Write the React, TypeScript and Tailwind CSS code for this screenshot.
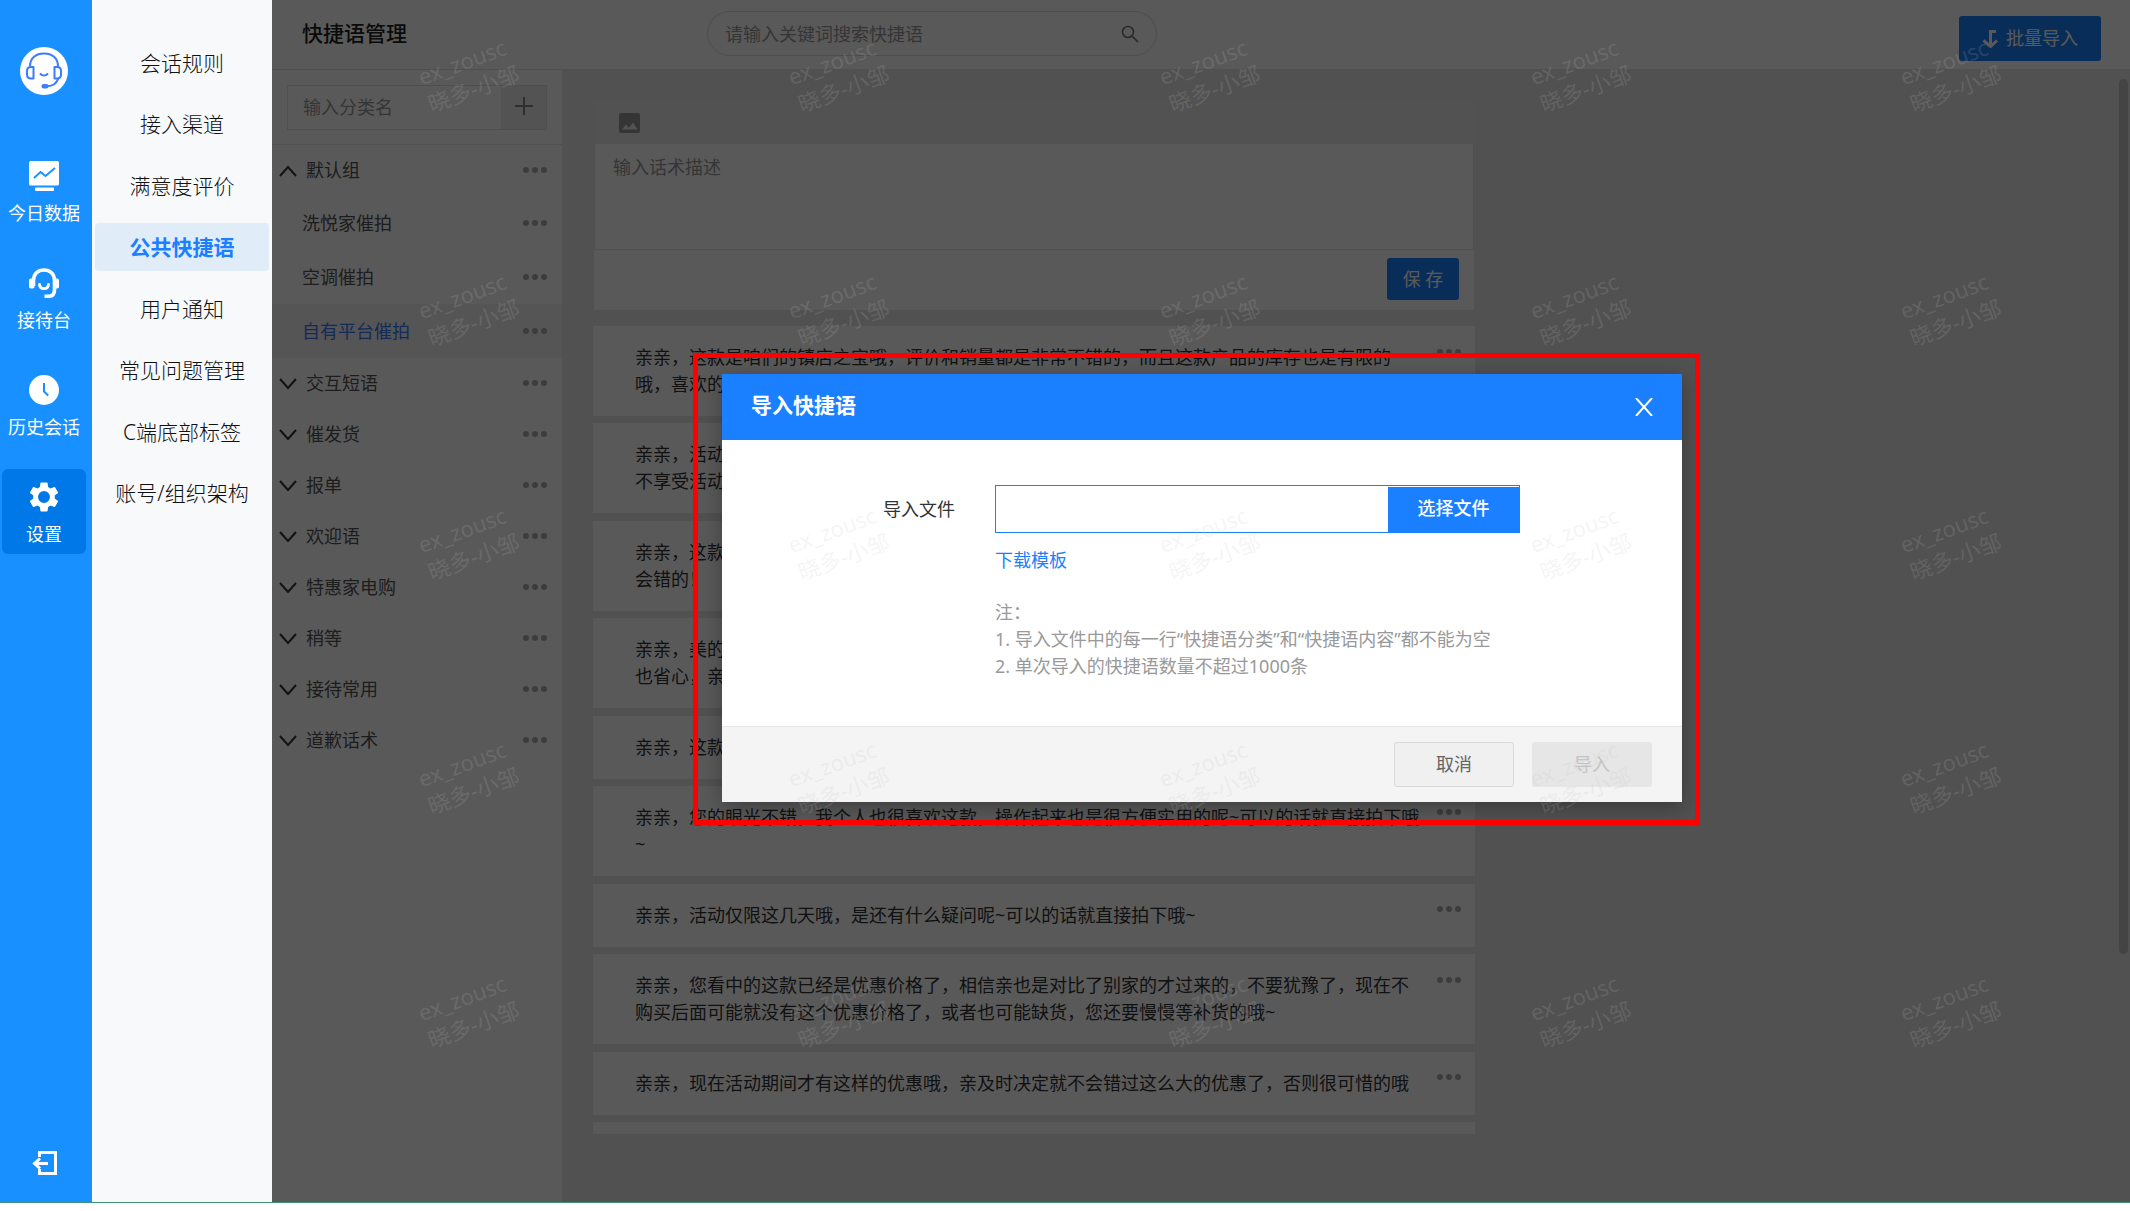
import type { ReactNode } from 'react';
import clsx from 'clsx';

interface NavItem {
  label: string;
  icon: ReactNode;
  active?: boolean;
}

const NAV_ITEMS: NavItem[] = [
  { label: '今日数据', icon: <DataIcon /> },
  { label: '接待台', icon: <HeadsetIcon /> },
  { label: '历史会话', icon: <ClockIcon /> },
  { label: '设置', icon: <GearIcon />, active: true },
];

const MENU_ITEMS = [
  '会话规则',
  '接入渠道',
  '满意度评价',
  '公共快捷语',
  '用户通知',
  '常见问题管理',
  'C端底部标签',
  '账号/组织架构',
];
const ACTIVE_MENU = '公共快捷语';

const DEFAULT_CHILDREN = ['洗悦家催拍', '空调催拍', '自有平台催拍'];
const ACTIVE_CATEGORY = '自有平台催拍';
const GROUPS = ['交互短语', '催发货', '报单', '欢迎语', '特惠家电购', '稍等', '接待常用', '道歉话术'];

const PHRASES = [
  '亲亲，这款是咱们的镇店之宝哦，评价和销量都是非常不错的，而且这款产品的库存也是有限的\n哦，喜欢的',
  '亲亲，活动\n不享受活动',
  '亲亲，这款\n会错的！',
  '亲亲，美的\n也省心，亲',
  '亲亲，这款',
  '亲亲，您的眼光不错，我个人也很喜欢这款，操作起来也是很方便实用的呢~可以的话就直接拍下哦\n~',
  '亲亲，活动仅限这几天哦，是还有什么疑问呢~可以的话就直接拍下哦~',
  '亲亲，您看中的这款已经是优惠价格了，相信亲也是对比了别家的才过来的，不要犹豫了，现在不\n购买后面可能就没有这个优惠价格了，或者也可能缺货，您还要慢慢等补货的哦~',
  '亲亲，现在活动期间才有这样的优惠哦，亲及时决定就不会错过这么大的优惠了，否则很可惜的哦',
];

function AvatarIcon() {
  return (
    <svg viewBox="0 0 48 48" className="size-12">
      <circle cx="24" cy="24" r="24" fill="#fff" />
      <g fill="none" stroke="#3d7bff" strokeWidth="2" strokeLinecap="round">
        <path d="M10 19C10 11 16 6.500 24 6.500S38 11 38 19" />
        <path d="M13.500 20v11.500H11c-2.500 0-4-1.500-4-4V24c0-2.500 1.500-4 4-4z" strokeLinejoin="round" />
        <path d="M34.500 20v11.500H37c2.500 0 4-1.500 4-4V24c0-2.500-1.500-4-4-4z" strokeLinejoin="round" />
        <path d="M38 32c-1.500 4.500-5 7-11 7.300" />
        <path d="M20.500 27c1.800 2 5.200 2 7 0" />
      </g>
      <rect x="21.500" y="37" width="7" height="4.500" rx="2.200" fill="#3d7bff" />
    </svg>
  );
}

function DataIcon() {
  return (
    <svg viewBox="0 0 30 30" className="size-[30px]">
      <rect width="30" height="24.500" rx="1.500" fill="#fff" />
      <rect x="6" y="26.500" width="19" height="3.500" rx="1" fill="#fff" />
      <path d="M5 17l6.500-6 5 4L26 7" fill="none" stroke="#1890ff" strokeWidth="1.800" />
    </svg>
  );
}

function HeadsetIcon() {
  return (
    <svg viewBox="0 0 30 30" className="size-[30px]">
      <path
        d="M4.500 18v-5.500C4.500 6 9 2 15 2s10.500 4 10.500 10.500V22c0 4-2 6-5.500 6.300h-4.500"
        fill="none"
        stroke="#fff"
        strokeWidth="3.600"
      />
      <rect y="10.500" width="5.500" height="10" rx="1.800" fill="#fff" />
      <rect x="24.500" y="10.500" width="5.500" height="10" rx="1.800" fill="#fff" />
      <path d="M10.500 16.500c.5 5.500 8.500 5.500 9 0" fill="none" stroke="#fff" strokeWidth="2.800" strokeLinecap="round" />
    </svg>
  );
}

function ClockIcon() {
  return (
    <svg viewBox="0 0 30 30" className="size-[30px]">
      <circle cx="15" cy="15" r="15" fill="#fff" />
      <path d="M15 8v8.500l4.200 4" fill="none" stroke="#1890ff" strokeWidth="2" />
    </svg>
  );
}

function GearIcon() {
  return (
    <svg viewBox="2 2 20 20" className="size-[30px]" fill="#fff">
      <path d="M19.140 12.940c.04-.3.060-.61.060-.94 0-.32-.02-.64-.07-.94l2.030-1.580a.49.49 0 0 0 .12-.61l-1.920-3.320a.488.488 0 0 0-.59-.22l-2.390.96c-.5-.38-1.030-.7-1.620-.94l-.36-2.540a.484.484 0 0 0-.48-.41h-3.840c-.24 0-.43.17-.47.410l-.36 2.540c-.59.24-1.130.57-1.620.94l-2.390-.96c-.22-.08-.47 0-.59.22L2.740 8.870c-.12.210-.08.470.12.610l2.030 1.580c-.05.3-.09.630-.09.94s.020.640.070.940l-2.030 1.580a.49.49 0 0 0-.12.610l1.920 3.320c.12.220.37.290.59.220l2.390-.96c.5.380 1.030.7 1.620.94l.36 2.540c.05.24.24.41.48.410h3.840c.24 0 .44-.17.470-.41l.36-2.540c.59-.24 1.130-.56 1.620-.94l2.390.96c.22.080.470 0 .59-.22l1.920-3.320c.12-.22.070-.47-.12-.61l-2.010-1.580zM12 16a4 4 0 1 1 0-8 4 4 0 0 1 0 8z" />
    </svg>
  );
}

function LogoutIcon() {
  return (
    <svg viewBox="0 0 25 24" className="h-6 w-[25px]">
      <path d="M7.500 6V1.500h16v21h-16V18" fill="none" stroke="#fff" strokeWidth="3" />
      <path d="M3 12.500h13M8 7.500l-5.500 5 5.500 5" fill="none" stroke="#fff" strokeWidth="3" />
    </svg>
  );
}

function Chevron({ up = false }: { up?: boolean }) {
  return (
    <svg viewBox="0 0 18 12" className={clsx('h-3 w-[18px]', up && 'rotate-180')} aria-hidden="true">
      <path d="M1 1l8 9 8-9" fill="none" stroke="#333" strokeWidth="2" />
    </svg>
  );
}

function MoreButton() {
  return (
    <button type="button" aria-label="更多" className="flex h-3 w-6 items-center justify-between pb-px">
      <span className="size-[6px] rounded-full bg-[#adadad]" />
      <span className="size-[6px] rounded-full bg-[#adadad]" />
      <span className="size-[6px] rounded-full bg-[#adadad]" />
    </button>
  );
}

function SideNav() {
  return (
    <nav className="flex w-[92px] shrink-0 flex-col bg-[#1890ff] pt-[47px] pr-[6px] pb-[27px] pl-[2px]">
      <div className="mb-[53px] flex justify-center">
        <AvatarIcon />
      </div>
      <div className="flex flex-col gap-[22px]">
        {NAV_ITEMS.map((item) => (
          <a
            key={item.label}
            href="#"
            className={clsx(
              'flex h-[85px] flex-col items-center gap-[9px] rounded-md pt-[13px] text-[18px] leading-[27px] text-white',
              item.active && 'bg-[#0078e7]'
            )}
          >
            {item.icon}
            {item.label}
          </a>
        ))}
      </div>
      <button type="button" aria-label="退出" className="mt-auto flex justify-center">
        <LogoutIcon />
      </button>
    </nav>
  );
}

function SettingsMenu() {
  return (
    <aside className="w-[180px] shrink-0 bg-[#f7f9fb] px-[3px] pt-[39px]">
      <div className="flex h-[478px] flex-col justify-between">
        {MENU_ITEMS.map((item) => (
          <a
            key={item}
            href="#"
            className={clsx(
              'flex h-12 items-center justify-center rounded text-[21px] leading-[30px]',
              item === ACTIVE_MENU ? 'bg-[#e1ecf9] font-bold text-[#1b80ff]' : 'font-light text-[#111]'
            )}
          >
            {item}
          </a>
        ))}
      </div>
    </aside>
  );
}

function Header() {
  return (
    <header className="flex h-[70px] items-start border-b border-[#e6e6e6] bg-white pr-[29px] pl-[30px]">
      <h1 className="w-[405px] pt-[18px] text-[21px] leading-[30px] font-medium text-[#222]">快捷语管理</h1>
      <div className="mt-[11px] flex h-[45px] w-[450px] items-center rounded-full border border-[#dcdcdc] pt-px pr-[17px] pl-[17px]">
        <input
          type="text"
          aria-label="搜索快捷语"
          placeholder="请输入关键词搜索快捷语"
          className="min-w-0 flex-1 bg-transparent text-[18px] leading-[27px] outline-none placeholder:text-[#999]"
        />
        <svg viewBox="0 0 18 18" className="size-[18px]" aria-hidden="true">
          <circle cx="7" cy="7" r="5.500" fill="none" stroke="#777" strokeWidth="1.600" />
          <path d="M11 11l6 6" stroke="#777" strokeWidth="1.600" />
        </svg>
      </div>
      <button
        type="button"
        className="mt-4 ml-auto flex h-[45px] w-[142px] items-center justify-center gap-2 rounded-[3px] bg-[#1b82ff] text-[18px] leading-[27px] text-white"
      >
        <svg viewBox="0 0 16 18" className="h-[18px] w-4" aria-hidden="true">
          <path d="M14 1.500H8.500V15" fill="none" stroke="#fff" strokeWidth="3" />
          <path d="M1.500 10.500l7 6 6.500-6" fill="none" stroke="#fff" strokeWidth="3" />
        </svg>
        批量导入
      </button>
    </header>
  );
}

function CategoryPanel() {
  return (
    <section className="w-[290px] shrink-0 bg-white">
      <div className="border-b border-[#e6e6e6] pt-[15px] pr-[15px] pb-[14px] pl-[15px]">
        <div className="flex h-[45px] border border-[#e2e2e2]">
          <input
            type="text"
            aria-label="分类名"
            placeholder="输入分类名"
            className="min-w-0 flex-1 bg-transparent px-[15px] text-[18px] leading-[27px] outline-none placeholder:text-[#999]"
          />
          <button type="button" aria-label="添加分类" className="flex w-[45px] items-center justify-center bg-[#ededed] pb-[3px]">
            <svg viewBox="0 0 18 18" className="size-[18px]">
              <path d="M9 0v18M0 9h18" stroke="#888" strokeWidth="2" />
            </svg>
          </button>
        </div>
      </div>
      <ul className="text-[18px] leading-[27px] text-[#555]">
        <li>
          <div className="flex h-[51px] items-center pr-[15px] pl-[7px]">
            <Chevron up />
            <span className="ml-[9px] flex-1">默认组</span>
            <MoreButton />
          </div>
          <ul>
            {DEFAULT_CHILDREN.map((name) => (
              <li
                key={name}
                className={clsx(
                  'flex h-[54px] items-center justify-between pr-[15px] pl-[30px]',
                  name === ACTIVE_CATEGORY && 'bg-[#f3f3f3] text-[#3b78ff]'
                )}
              >
                {name}
                <MoreButton />
              </li>
            ))}
          </ul>
        </li>
        {GROUPS.map((name) => (
          <li key={name} className="flex h-[51px] items-center pr-[15px] pl-[7px]">
            <Chevron />
            <span className="ml-[9px] flex-1">{name}</span>
            <MoreButton />
          </li>
        ))}
      </ul>
    </section>
  );
}

function Editor() {
  return (
    <div className="mx-px mb-4 bg-white">
      <div className="flex h-[43px] items-center bg-[#ebebeb] pl-[25px]">
        <button type="button" aria-label="插入图片">
          <svg viewBox="0 0 21 20" className="h-5 w-[21px]">
            <rect width="21" height="20" rx="2" fill="#999" />
            <path d="M3 16.500l4-5 3 3.200 4-5.200 4.500 7z" fill="#ebebeb" />
          </svg>
        </button>
      </div>
      <textarea
        aria-label="话术描述"
        placeholder="输入话术描述"
        className="block h-[106px] w-full resize-none border border-t-0 border-[#e6e6e6] px-[18px] py-[10px] text-[18px] leading-[27px] outline-none placeholder:text-[#999]"
      />
      <div className="flex h-[60px] justify-end pt-2 pr-[15px]">
        <button type="button" className="h-[42px] w-[72px] rounded-[3px] bg-[#1b82ff] text-[18px] leading-[27px] text-white">
          保 存
        </button>
      </div>
    </div>
  );
}

function PhraseList() {
  return (
    <ul className="flex h-[808px] flex-col justify-between overflow-hidden">
      {PHRASES.map((text) => (
        <li key={text} className="flex shrink-0 bg-white pr-[14px] pl-[42px]">
          <p className="flex-1 py-[18px] text-[18px] leading-[27px] whitespace-pre text-[#333]">{text}</p>
          <div className="pt-5">
            <MoreButton />
          </div>
        </li>
      ))}
      <li className="h-3 shrink-0 bg-white" />
    </ul>
  );
}

function ImportDialog() {
  return (
    <div className="absolute inset-0 flex items-start justify-center bg-black/65 pt-[374px]">
      <div
        role="dialog"
        aria-labelledby="import-title"
        className="relative ml-[2px] w-[960px] bg-white text-[18px] leading-[27px] shadow-[0_5px_20px_rgba(0,0,0,0.3)]"
      >
        <div className="flex h-[66px] items-center justify-between bg-[#1b80ff] pr-[29px] pl-[29px] text-white">
          <h2 id="import-title" className="pb-1 text-[21px] leading-[30px] font-bold">
            导入快捷语
          </h2>
          <button type="button" aria-label="关闭">
            <svg viewBox="0 0 18 18" className="size-[18px]">
              <path d="M1 0l16 18M17 0L1 18" stroke="#fff" strokeWidth="2" />
            </svg>
          </button>
        </div>

        <div className="h-[286px] pt-[45px] pl-[161px]">
          <div className="flex items-center">
            <label htmlFor="import-file" className="w-28 text-[#333]">
              导入文件
            </label>
            <div className="flex h-12 w-[525px] border border-[#1b80ff]">
              <input id="import-file" type="text" readOnly className="min-w-0 flex-1 outline-none" />
              <button type="button" className="mt-px w-[131px] bg-[#1b80ff] pb-[2px] font-medium text-white">
                选择文件
              </button>
            </div>
          </div>
          <div className="pt-[14px] pl-28">
            <a href="#" className="text-[#1b80ff]">
              下载模板
            </a>
            <div className="mt-[25px] text-[#999]">
              <p>注：</p>
              <p>1. 导入文件中的每一行“快捷语分类”和“快捷语内容”都不能为空</p>
              <p>2. 单次导入的快捷语数量不超过1000条</p>
            </div>
          </div>
        </div>

        <div className="flex h-[76px] justify-end gap-[18px] border-t border-[#e6e6e6] bg-[#f4f4f4] pt-[15px] pr-[30px]">
          <button type="button" className="h-[45px] w-[120px] rounded-[3px] border border-[#d9d9d9] bg-[#f0f0f0] text-[#666]">
            取消
          </button>
          <button type="button" disabled className="h-[45px] w-[120px] rounded-[3px] bg-[#e6e6e6] text-[#c4c4c4]">
            导入
          </button>
        </div>

        {/* highlight frame */}
        <div className="pointer-events-none absolute -top-[21px] -right-[18px] -bottom-[23px] -left-[29px] border-[5px] border-[#f00]" />
      </div>
    </div>
  );
}

function Watermark() {
  return (
    <div className="pointer-events-none absolute inset-0 overflow-hidden" aria-hidden="true">
      <div className="-mt-[42px] -mr-[6px] ml-[11px] grid auto-rows-[234px] grid-cols-5">
        {Array.from({ length: 25 }, (_, i) => (
          <div key={i} className="flex items-center justify-center">
            <div className="-rotate-20 text-[22px] leading-[29px] text-[#c0c0c0]/18">
              ex_zousc
              <br />
              晓多-小邹
            </div>
          </div>
        ))}
      </div>
    </div>
  );
}

export default function App() {
  return (
    <div className="flex h-screen flex-col bg-white pb-2 font-['Noto_Sans','Noto_Sans_CJK_SC',sans-serif]">
      <div className="flex min-h-0 flex-1 border-b border-[#3f9278]">
        <SideNav />
        <SettingsMenu />
        <div className="relative flex min-w-0 flex-1 flex-col">
          <Header />
          <div className="flex min-h-0 flex-1 bg-[#e7e7e7]">
            <CategoryPanel />
            <main className="flex flex-1 justify-between pt-[31px] pr-[2px] pl-[31px]">
              <div className="w-[882px]">
                <Editor />
                <PhraseList />
              </div>
              {/* scrollbar thumb */}
              <div className="-mt-[22px] h-[875px] w-[9px] rounded-full bg-[#c4c4c4]" />
            </main>
          </div>
          <ImportDialog />
          <Watermark />
        </div>
      </div>
    </div>
  );
}
